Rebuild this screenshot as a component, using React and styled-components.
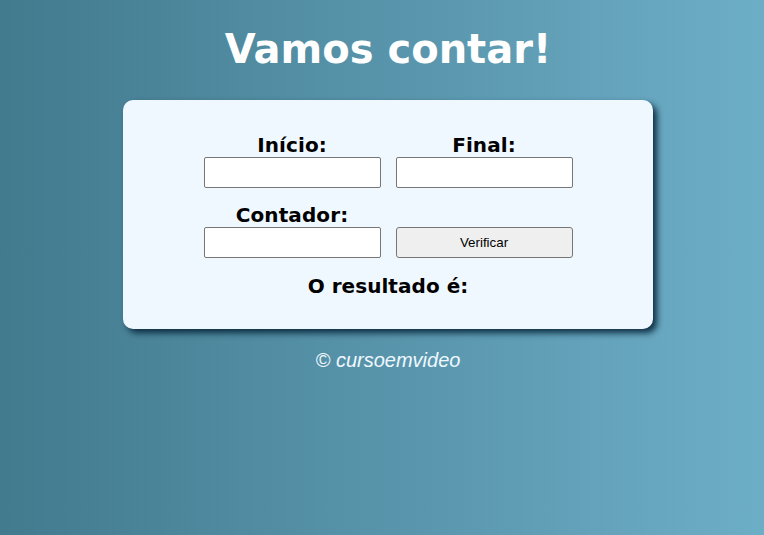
import React from "react";
import styled, { createGlobalStyle } from "styled-components";

const Global = createGlobalStyle`
  html, body { margin: 0; padding: 0; }
  body {
    min-height: 535px;
    background: linear-gradient(to right, #427a8e, #6daec7);
    font-family: Verdana, "DejaVu Sans", sans-serif;
  }
`;

const Page = styled.div`
  box-sizing: border-box;
  min-height: 535px;
  padding: 25px 0 0 12px;
  display: flex;
  flex-direction: column;
  align-items: center;
`;

const Title = styled.h1`
  margin: 0;
  color: #ffffff;
  font-family: Verdana, "DejaVu Sans", sans-serif;
  font-weight: bold;
  font-size: 40px;
  line-height: 48px;
`;

const Card = styled.section`
  box-sizing: border-box;
  width: 530px;
  height: 229px;
  margin-top: 27px;
  padding-top: 33px;
  background: #f0f8ff;
  border-radius: 10px;
  box-shadow: 4px 4px 6px rgba(5, 35, 55, 0.9);
  display: flex;
  flex-direction: column;
  align-items: center;
`;

const Grid = styled.div`
  display: grid;
  grid-template-columns: 177px 177px;
  column-gap: 15px;
  row-gap: 15px;
`;

const Field = styled.div`
  display: flex;
  flex-direction: column;
  align-items: center;
  justify-content: flex-end;
`;

const Label = styled.label`
  font-family: Verdana, "DejaVu Sans", sans-serif;
  font-weight: bold;
  font-size: 20px;
  line-height: 24px;
  letter-spacing: 0.1px;
  color: #000;
`;

const Input = styled.input`
  box-sizing: border-box;
  width: 177px;
  height: 31px;
  margin: 0;
  border: 1px solid #767676;
  border-radius: 2px;
  background: #fff;
`;

const Button = styled.button`
  box-sizing: border-box;
  width: 177px;
  height: 31px;
  margin: 0;
  border: 1px solid #767676;
  border-radius: 3px;
  background: #efefef;
  font-family: Arial, "Liberation Sans", sans-serif;
  font-size: 13.33px;
  color: #000;
`;

const Result = styled.p`
  margin: 16px 0 0;
  font-family: Verdana, "DejaVu Sans", sans-serif;
  font-weight: bold;
  font-size: 20px;
  line-height: 24px;
  letter-spacing: 0.05px;
  color: #000;
`;

const Footer = styled.footer`
  margin-top: 19px;
  font-family: Arial, "Liberation Sans", sans-serif;
  font-style: italic;
  font-size: 20px;
  line-height: 24px;
  color: #f0f8ff;
`;

export default function App() {
  return (
    <>
      <Global />
      <Page>
        <Title>Vamos contar!</Title>
        <Card>
          <Grid>
            <Field>
              <Label htmlFor="ini">Início:</Label>
              <Input id="ini" type="number" />
            </Field>
            <Field>
              <Label htmlFor="fim">Final:</Label>
              <Input id="fim" type="number" />
            </Field>
            <Field>
              <Label htmlFor="passo">Contador:</Label>
              <Input id="passo" type="number" />
            </Field>
            <Field>
              <Button type="button">Verificar</Button>
            </Field>
          </Grid>
          <Result>O resultado é:</Result>
        </Card>
        <Footer>© cursoemvideo</Footer>
      </Page>
    </>
  );
}
